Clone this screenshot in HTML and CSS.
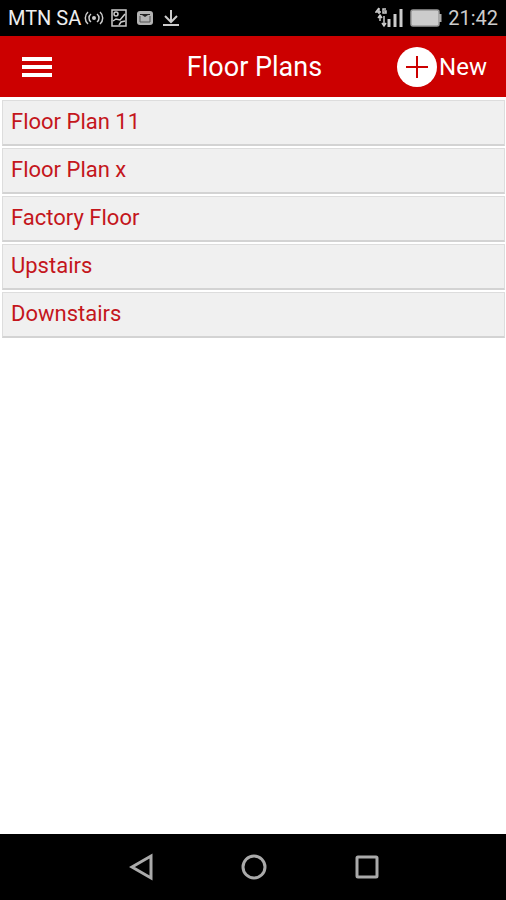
FILE: index.html
```html
<!DOCTYPE html>
<html lang="en">
  <head>
    <meta charset="UTF-8" />
    <meta name="viewport" content="width=device-width, initial-scale=1" />
    <title>Floor Plans</title>
    <link rel="stylesheet" href="styles.css">
  </head>
  <body>
    <div class="status">
      <span class="carrier">MTN SA</span>
      <svg class="hotspot" width="20" height="16" viewBox="0 0 20 16">
        <circle cx="10" cy="8" r="2" fill="#ccc" stroke="none" />
        <path d="M7 4a5 5 0 0 0 0 8M13 4a5 5 0 0 1 0 8M4 2a8 8 0 0 0 0 12M16 2a8 8 0 0 1 0 12" />
      </svg>
      <svg class="picture" width="16" height="18" viewBox="0 0 16 18">
        <rect x="1" y="1" width="14" height="16" />
        <circle cx="5" cy="5" r="2" />
        <path d="M2 12l3-2 4 1 5-6M8 16l2-3 4-1" />
      </svg>
      <svg class="mail" width="16" height="14" viewBox="0 0 16 14">
        <rect x="0" y="0" width="16" height="14" rx="3" fill="#b4b4b4" stroke="none" />
        <path d="M3 3h10v1h-2l-3 2-3-2H3z" fill="#222" stroke="none" />
        <path d="M3 5v6h10V5" stroke="#555" stroke-width="1" />
      </svg>
      <svg class="download" width="16" height="18" viewBox="0 0 16 18">
        <path d="M8 1v12M2 7l6 6 6-6M0 16h16" stroke-width="2" />
      </svg>
      <div class="status-right">
        <svg width="29" height="22" viewBox="0 0 29 22">
          <path d="M4 1L1 5h5M4 1v6M11 2H8v4h3V4H9" />
          <path d="M5 8v6M3 11l2-3 2 3M9 9v10M7 16l2 3 2-3" />
          <path d="M14 20v-8M20 20V7M26 20V2" stroke-width="3" />
        </svg>
        <svg width="32" height="18" viewBox="0 0 32 18">
          <rect x="1" y="1" width="28" height="16" rx="2" stroke="#999" fill="#ccc" />
          <path d="M30 5v8" stroke="#aaa" stroke-width="3" />
        </svg>
        <span class="clock">21:42</span>
      </div>
    </div>

    <header class="topbar">
      <button class="menu" aria-label="Menu">
        <span></span>
        <span></span>
        <span></span>
      </button>
      <h1>Floor Plans</h1>
      <button class="new">
        <svg width="40" height="40" viewBox="0 0 40 40">
          <circle cx="20" cy="20" r="20" fill="#fff" />
          <path d="M20 9v22M9 20h22" stroke="#c00" stroke-width="2" />
        </svg>
        New
      </button>
    </header>

    <main>
      <ul class="plans">
        <li><a href="#">Floor Plan 11</a></li>
        <li><a href="#">Floor Plan x</a></li>
        <li><a href="#">Factory Floor</a></li>
        <li><a href="#">Upstairs</a></li>
        <li><a href="#">Downstairs</a></li>
      </ul>
    </main>

    <nav class="softkeys">
      <button aria-label="Back">
        <svg width="26" height="28" viewBox="0 0 26 28">
          <path d="M23 3v22L4 14z" />
        </svg>
      </button>
      <button aria-label="Home">
        <svg width="26" height="28" viewBox="0 0 26 28">
          <circle cx="13" cy="14" r="11" />
        </svg>
      </button>
      <button aria-label="Recent apps">
        <svg width="26" height="28" viewBox="0 0 26 28">
          <rect x="3" y="4" width="20" height="20" rx="1" />
        </svg>
      </button>
    </nav>
  </body>
</html>
```
FILE: styles.css
```css
* {
  box-sizing: border-box;
}

body {
  margin: 0;
  min-height: 100vh;
  display: flex;
  flex-direction: column;
  background: #fff;
  font-family: Roboto, sans-serif;
}

button {
  padding: 0;
  border: none;
  background: none;
  color: inherit;
  font: inherit;
  cursor: pointer;
}

svg {
  display: block;
  flex-shrink: 0;
}

/* Status bar */
.status {
  display: flex;
  align-items: center;
  height: 36px;
  padding: 0 8px;
  background: #000;
  color: #ccc;
  font-size: 20px;
}

.status svg {
  fill: none;
  stroke: #ccc;
  stroke-width: 1.5;
}

.carrier {
  color: #eee;
}

.hotspot {
  margin-left: 3px;
}

.picture {
  margin-left: 7px;
}

.mail,
.download {
  margin-left: 10px;
}

.status-right {
  display: flex;
  align-items: center;
  gap: 6px;
  margin-left: auto;
}

/* Header */
.topbar {
  display: grid;
  grid-template-columns: 1fr auto 1fr;
  align-items: center;
  height: 61px;
  padding: 0 19px 0 22px;
  background: #c00;
  color: #fff;
}

.topbar h1 {
  margin: 0;
  font-size: 27px;
  font-weight: 400;
}

.menu {
  display: flex;
  flex-direction: column;
  gap: 4px;
  width: 30px;
}

.menu span {
  height: 4px;
  width: 100%;
  background: #fff;
}

.new {
  display: flex;
  align-items: center;
  justify-self: end;
  gap: 2px;
  font-size: 24px;
}

/* List */
main {
  flex: 1;
}

.plans {
  display: flex;
  flex-direction: column;
  gap: 2px;
  margin: 0;
  padding: 3px 1px 0 2px;
  list-style: none;
}

.plans a {
  display: block;
  height: 46px;
  padding: 0 8px;
  border: 1px solid #ddd;
  border-bottom: 2px solid #d3d3d3;
  background: #f0f0f0;
  color: #c4161c;
  font-size: 22px;
  line-height: 42px;
  text-decoration: none;
}

/* Android keys */
.softkeys {
  display: flex;
  justify-content: center;
  gap: 87px;
  height: 66px;
  padding-left: 2px;
  background: #000;
}

.softkeys svg {
  fill: none;
  stroke: #aaa;
  stroke-width: 3;
}
```
